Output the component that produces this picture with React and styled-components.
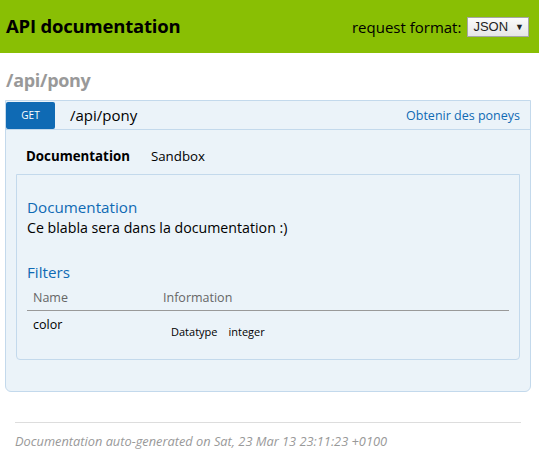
import React from "react";
import styled, {createGlobalStyle} from "styled-components";

const Global = createGlobalStyle`
  body {
    margin: 0;
    font-family: "Open Sans", "DejaVu Sans", sans-serif;
    background: #fff;
  }
`;

const Header = styled.div`
  background-color: #89bf04;
  height: 53px;
  display: flex;
  align-items: center;
  justify-content: space-between;
  padding: 0 10px 0 6px;
`;

const Title = styled.h1`
  margin: 0 0 2px 0;
  font-size: 18.5px;
  font-weight: 700;
  color: #000;
  letter-spacing: -0.2px;
`;

const Format = styled.div`
  display: flex;
  align-items: center;
  gap: 6px;
  font-size: 15px;
  color: #000;
`;

const Select = styled.div`
  display: flex;
  align-items: center;
  gap: 7px;
  height: 18px;
  padding: 0 4px 0 5px;
  border: 1px solid #a6a6a6;
  background: linear-gradient(#fbfbfb, #e6e6e6);
  font-family: "Liberation Sans", Arial, sans-serif;
  font-size: 13px;
  color: #222;
`;

const Arrow = styled.span`
  font-size: 9px;
`;

const Content = styled.div`
  padding: 0 8px 0 5px;
`;

const Resource = styled.h2`
  margin: 15px 0 8px 1px;
  font-size: 18px;
  font-weight: 700;
  color: #999;
  letter-spacing: -0.3px;
`;

const Operation = styled.div`
  border: 1px solid #c3d9ec;
  background: #ebf3f9;
  border-radius: 0 0 6px 6px;
`;

const OpHeading = styled.div`
  display: flex;
  align-items: center;
  height: 28px;
  border-bottom: 1px solid #c3d9ec;
`;

const Method = styled.span`
  background: #0f6ab4;
  color: #fff;
  font-size: 10px;
  width: 49px;
  height: 27px;
  display: flex;
  align-items: center;
  justify-content: center;
  border-radius: 2px;
`;

const Path = styled.span`
  font-size: 15px;
  color: #000;
  margin-left: 15px;
  flex: 1;
`;

const Summary = styled.span`
  font-size: 12.5px;
  color: #0f6ab4;
  margin-right: 10px;
`;

const OpContent = styled.div`
  padding: 17px 10px 31px 10px;
`;

const Tabs = styled.div`
  display: flex;
  gap: 21px;
  padding-left: 10px;
  font-size: 13.3px;
  height: 19px;
  margin-bottom: 8px;
`;

const Tab = styled.span`
  font-weight: ${(p) => (p.$active ? 700 : 400)};
  color: #000;
`;

const Panel = styled.div`
  border: 1px solid #c3d9ec;
  border-radius: 0 0 4px 4px;
  padding: 21px 10px 14px 10px;
`;

const SectionTitle = styled.h4`
  margin: 0;
  font-size: 15.2px;
  font-weight: 400;
  color: #0f6ab4;
  line-height: 22px;
`;

const Text = styled.p`
  margin: 0 0 23px 0;
  font-size: 14.2px;
  color: #000;
  line-height: 20px;
`;

const Table = styled.table`
  width: 100%;
  border-collapse: collapse;
  margin-top: 3px;
`;

const Th = styled.th`
  text-align: left;
  font-weight: 400;
  font-size: 12.5px;
  color: #666;
  padding: 3px 6px 4px 6px;
  border-bottom: 1px solid #999;
  width: ${(p) => p.$width || "auto"};
`;

const Td = styled.td`
  font-size: 12.5px;
  color: #000;
  padding: 5px 6px 0 6px;
  vertical-align: top;
  height: 29px;
`;

const Info = styled.div`
  display: flex;
  gap: 11px;
  font-size: 11px;
  padding: 8px 0 0 8px;
`;

const Footer = styled.div`
  margin: 30px 18px 0 15px;
  border-top: 1px solid #ddd;
  padding-top: 9px;
  font-size: 12.8px;
  font-style: italic;
  color: #999;
`;

export default function App() {
  return (
    <>
      <Global />
      <Header>
        <Title>API documentation</Title>
        <Format>
          request format:
          <Select>
            JSON <Arrow>▼</Arrow>
          </Select>
        </Format>
      </Header>
      <Content>
        <Resource>/api/pony</Resource>
        <Operation>
          <OpHeading>
            <Method>GET</Method>
            <Path>/api/pony</Path>
            <Summary>Obtenir des poneys</Summary>
          </OpHeading>
          <OpContent>
            <Tabs>
              <Tab $active>Documentation</Tab>
              <Tab>Sandbox</Tab>
            </Tabs>
            <Panel>
              <SectionTitle>Documentation</SectionTitle>
              <Text>Ce blabla sera dans la documentation :)</Text>
              <SectionTitle>Filters</SectionTitle>
              <Table>
                <thead>
                  <tr>
                    <Th $width="118px">Name</Th>
                    <Th>Information</Th>
                  </tr>
                </thead>
                <tbody>
                  <tr>
                    <Td>color</Td>
                    <Td>
                      <Info>
                        <span>Datatype</span>
                        <span>integer</span>
                      </Info>
                    </Td>
                  </tr>
                </tbody>
              </Table>
            </Panel>
          </OpContent>
        </Operation>
      </Content>
      <Footer>Documentation auto-generated on Sat, 23 Mar 13 23:11:23 +0100</Footer>
    </>
  );
}
